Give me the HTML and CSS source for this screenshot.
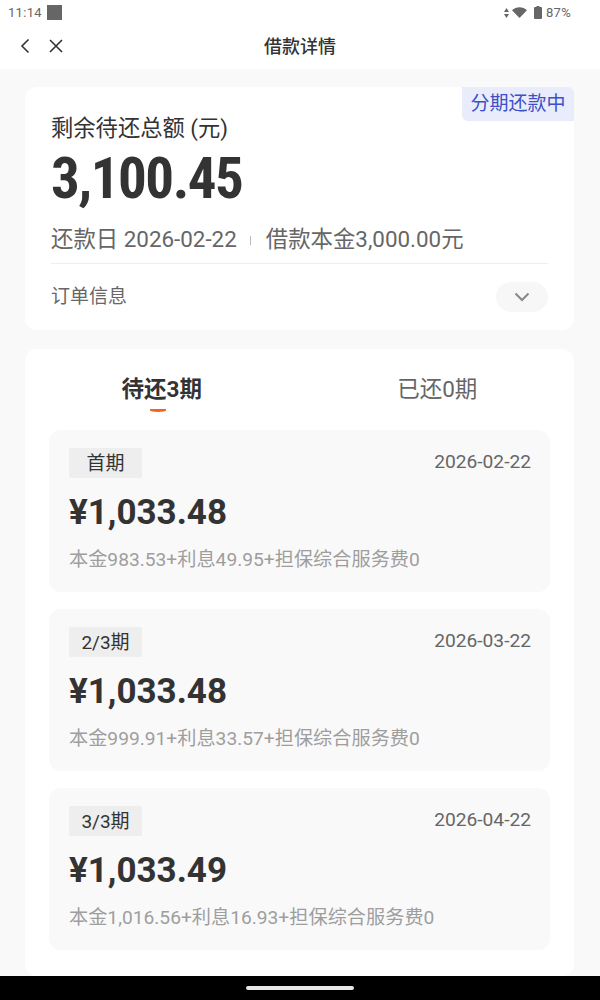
FILE: index.html
```html
<!DOCTYPE html>
<html lang="zh-CN">
<head>
  <meta charset="UTF-8">
  <meta name="viewport" content="width=device-width, initial-scale=1.0">
  <title>借款详情</title>
  <link rel="stylesheet" href="styles.css">
</head>
<body>
  <!-- Status bar -->
  <div class="status-bar">
    <div class="status-left">
      <span>11:14</span>
      <span class="status-square"></span>
    </div>
    <div class="status-right">
      <svg width="5" height="10" viewBox="0 0 5 10"><path d="M2.5 0 L5 4 H0 Z M2.5 10 L0 6 H5 Z" fill="#666"/></svg>
      <svg class="status-wifi" width="15" height="11" viewBox="0 0 15 11"><path d="M0 3.2 C4 -0.8 11 -0.8 15 3.2 L7.5 11 Z" fill="#666"/></svg>
      <svg class="status-battery" width="8" height="13" viewBox="0 0 8 13"><path d="M2.5 0 H5.5 V1 H7 A1 1 0 0 1 8 2 V12 A1 1 0 0 1 7 13 H1 A1 1 0 0 1 0 12 V2 A1 1 0 0 1 1 1 H2.5 Z" fill="#666"/></svg>
      <span class="status-level">87%</span>
    </div>
  </div>

  <!-- Nav -->
  <header class="nav">
    <div class="nav-icons">
      <svg width="10" height="16" viewBox="0 0 10 16"><path d="M8.5 1.5 L2 8 L8.5 14.5" fill="none" stroke="#333" stroke-width="1.6"/></svg>
      <svg width="14" height="14" viewBox="0 0 14 14"><path d="M1 1 L13 13 M13 1 L1 13" fill="none" stroke="#333" stroke-width="1.6"/></svg>
    </div>
    <h1 class="nav-title">借款详情</h1>
  </header>

  <main class="content">
    <!-- Summary -->
    <section class="card summary">
      <span class="badge">分期还款中</span>
      <div class="summary-label">剩余待还总额 (元)</div>
      <div class="summary-amount">3,100.45</div>
      <div class="summary-meta">
        <span>还款日 2026-02-22</span>
        <span class="meta-sep"></span>
        <span>借款本金3,000.00元</span>
      </div>
      <div class="order-row">
        <span class="order-label">订单信息</span>
        <span class="order-toggle">
          <svg width="16" height="10" viewBox="0 0 16 10"><path d="M1.5 1.5 L8 8 L14.5 1.5" fill="none" stroke="#888" stroke-width="2"/></svg>
        </span>
      </div>
    </section>

    <!-- Plan -->
    <section class="card plan">
      <div class="tabs">
        <div class="tab tab-active">待还3期</div>
        <div class="tab">已还0期</div>
      </div>

      <article class="period">
        <div class="period-top">
          <span class="period-tag">首期</span>
          <span class="period-date">2026-02-22</span>
        </div>
        <div class="period-amount">¥1,033.48</div>
        <div class="period-detail">本金983.53+利息49.95+担保综合服务费0</div>
      </article>

      <article class="period">
        <div class="period-top">
          <span class="period-tag">2/3期</span>
          <span class="period-date">2026-03-22</span>
        </div>
        <div class="period-amount">¥1,033.48</div>
        <div class="period-detail">本金999.91+利息33.57+担保综合服务费0</div>
      </article>

      <article class="period">
        <div class="period-top">
          <span class="period-tag">3/3期</span>
          <span class="period-date">2026-04-22</span>
        </div>
        <div class="period-amount">¥1,033.49</div>
        <div class="period-detail">本金1,016.56+利息16.93+担保综合服务费0</div>
      </article>
    </section>
  </main>

  <div class="home-bar"><span class="home-pill"></span></div>
</body>
</html>
```

FILE: styles.css
```css
* {
  box-sizing: border-box;
}
html, body {
  height: 100%;
}
body {
  margin: 0;
  display: flex;
  flex-direction: column;
  height: 1000px;
  overflow: hidden;
  background-color: #f9f9fa;
  font-family: Roboto, "Noto Sans CJK SC", sans-serif;
  color: #333;
}

.status-bar {
  height: 25px;
  flex: none;
  display: flex;
  justify-content: space-between;
  align-items: center;
  padding: 0 29px 0 8px;
  background: #fff;
  font-size: 13px;
  color: #666;
  letter-spacing: 0.3px;
}
.status-left, .status-right {
  display: flex;
  align-items: center;
}
.status-left {
  gap: 5px;
}
.status-right {
  gap: 3px;
}
.status-battery {
  margin-left: 4px;
}
.status-level {
  margin-left: 1px;
}
.status-square {
  width: 15px;
  height: 15px;
  background: #666;
}

.nav {
  height: 44px;
  flex: none;
  position: relative;
  display: flex;
  justify-content: center;
  align-items: center;
  padding-bottom: 4px;
  background: #fff;
}
.nav-icons {
  position: absolute;
  left: 20px;
  top: 13px;
  display: flex;
  align-items: center;
  gap: 19px;
}
.nav-title {
  margin: 0;
  font-size: 18px;
  font-weight: 500;
  color: #333;
}

.content {
  flex: 1;
  min-height: 0;
  display: flex;
  flex-direction: column;
  gap: 19px;
  padding: 18px 26px 0 25px;
  overflow: hidden;
}
.card {
  background: #fff;
  border-radius: 12px;
}

.summary {
  position: relative;
  height: 243px;
  flex: none;
  padding: 26px 26px 0 26px;
}
.badge {
  position: absolute;
  top: 0;
  right: 0;
  width: 112px;
  height: 34px;
  padding-bottom: 5px;
  display: flex;
  justify-content: center;
  align-items: center;
  background: #e9ecfb;
  border-radius: 0 6px 0 6px;
  font-size: 19px;
  color: #3c50c8;
}
.summary-label {
  font-size: 22.3px;
  line-height: 30px;
  color: #333;
}
.summary-amount {
  margin-top: 6px;
  font-size: 57px;
  line-height: 60px;
  font-weight: 700;
  font-stretch: 78%;
  letter-spacing: -1.5px;
  color: #333;
}
.summary-meta {
  margin-top: 14px;
  display: flex;
  align-items: center;
  font-size: 22.4px;
  line-height: 32px;
  color: #666;
}
.meta-sep {
  width: 1px;
  height: 9px;
  margin: 2px 15px 0 13px;
  background: #bbb;
}
.order-row {
  margin-top: 8px;
  padding-top: 18px;
  border-top: 1px solid #eee;
  display: flex;
  justify-content: space-between;
  align-items: flex-start;
  font-size: 19px;
  color: #666;
}
.order-label {
  padding-top: 2px;
  line-height: 26px;
}
.order-toggle {
  width: 52px;
  height: 30px;
  border-radius: 15px;
  background: #f7f7f7;
  display: flex;
  justify-content: center;
  align-items: center;
}

.plan {
  flex: 1;
  padding: 0 24px;
}
.tabs {
  height: 81px;
  margin: 0 -24px;
  display: flex;
}
.tab {
  flex: 1;
  padding-top: 25px;
  text-align: center;
  font-size: 22.5px;
  line-height: 30px;
  color: #666;
  position: relative;
}
.tab-active {
  font-weight: 700;
  color: #333;
}
.tab + .tab {
  padding-left: 2px;
}
.tab-active::after {
  content: "";
  position: absolute;
  left: 50%;
  top: 60px;
  width: 16px;
  height: 3px;
  margin-left: -12px;
  border-radius: 0 0 50% 50%;
  background: #f0651e;
}
.period {
  height: 162px;
  margin-bottom: 17px;
  padding: 18px 19px 0 20px;
  border-radius: 12px;
  background: #f9f9f9;
}
.period-top {
  display: flex;
  justify-content: space-between;
  align-items: flex-start;
}
.period-tag {
  width: 73px;
  height: 30px;
  padding-bottom: 3px;
  display: flex;
  justify-content: center;
  align-items: center;
  background: #eeeeee;
  border-radius: 2px;
  font-size: 19px;
  color: #333;
}
.period-date {
  padding-top: 1px;
  font-size: 19.2px;
  line-height: 26px;
  color: #666;
}
.period-amount {
  margin-top: 13px;
  font-size: 35px;
  line-height: 44px;
  font-weight: 700;
  color: #333;
}
.period-detail {
  margin-top: 11.5px;
  font-size: 19.2px;
  line-height: 26px;
  color: #9e9e9e;
}

.home-bar {
  height: 24px;
  flex: none;
  background: #000;
  display: flex;
  justify-content: center;
  align-items: center;
}
.home-pill {
  width: 108px;
  height: 4px;
  border-radius: 2px;
  background: #e8e8e8;
}
```
